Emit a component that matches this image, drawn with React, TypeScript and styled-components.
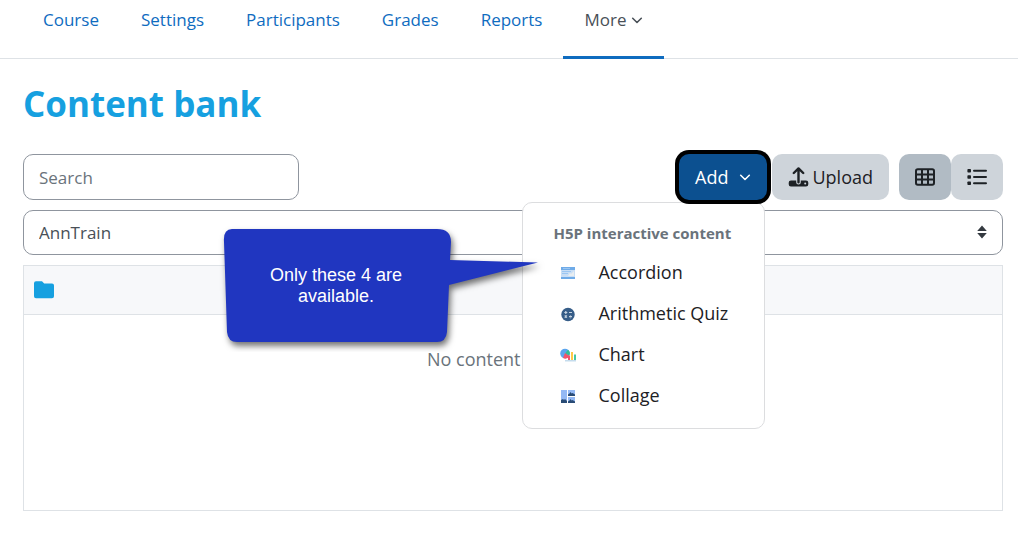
import React from "react";
import styled, { createGlobalStyle } from "styled-components";

const Global = createGlobalStyle`
  *, *::before, *::after { box-sizing: border-box; }
  body {
    margin: 0;
    background: #fff;
    color: #1d2125;
    font-family: "Open Sans", "Noto Sans", sans-serif;
    font-size: 18px;
    line-height: 28px;
  }
  button, input, select { font: inherit; color: inherit; margin: 0; }
`;

const Nav = styled.nav`
  display: flex;
  height: 59px;
  padding: 0 22px;
  border-bottom: 1px solid #dee2e6;
  font-size: 17px;
`;

const NavLink = styled.a<{ $active?: boolean }>`
  display: flex;
  align-items: center;
  gap: 5px;
  height: 59px;
  padding: 0 21px 16px;
  border-bottom: 3px solid ${(p) => (p.$active ? "#0f6cbf" : "transparent")};
  color: ${(p) => (p.$active ? "#495057" : "#0f6cbf")};
  text-decoration: none;
  white-space: nowrap;
`;

const Main = styled.main`
  padding: 21px 15px 36px 23px;
`;

const Title = styled.h1`
  margin: 0 0 26px;
  color: #16a0e0;
  font-size: 35px;
  font-weight: 700;
  line-height: 48px;
`;

const Toolbar = styled.div`
  display: flex;
  align-items: center;
  margin-bottom: 10px;
`;

const SearchBox = styled.input`
  width: 276px;
  height: 46px;
  margin-right: auto;
  padding: 0 15px;
  border: 1px solid #8f959e;
  border-radius: 10px;
  background: #fff;
  font-size: 17px;
  &::placeholder { color: #6a737b; opacity: 1; }
`;

const AddWrap = styled.div`
  position: relative;
  z-index: 2;
  margin-right: 5px;
`;

const Button = styled.button<{ $tone?: "primary" | "active" }>`
  display: flex;
  align-items: center;
  justify-content: center;
  gap: 3px;
  height: 46px;
  padding: 0 16px;
  border: 0;
  border-radius: 10px;
  background: ${(p) =>
    p.$tone === "primary" ? "#0c5090" : p.$tone === "active" ? "#b1bbc4" : "#ced4da"};
  color: ${(p) => (p.$tone === "primary" ? "#fff" : "#1d2125")};
`;

const AddButton = styled(Button)`
  position: relative;
  z-index: 1;
  gap: 11px;
  box-shadow: 0 0 0 4px #000;
`;

const ViewToggle = styled.div`
  display: flex;
  margin-left: 10px;
  ${Button} { width: 52px; padding: 0; }
`;

const Menu = styled.div`
  position: absolute;
  top: calc(100% + 2px);
  right: 2px;
  width: 243px;
  padding: 16px 0 13px;
  border: 1px solid #dcdddf;
  border-radius: 10px;
  background: #fff;
`;

const MenuHeading = styled.h2`
  margin: 0 0 4px;
  padding: 0 30px;
  color: #6a737b;
  font-size: 15px;
  font-weight: 700;
  line-height: 28px;
  white-space: nowrap;
`;

const MenuItem = styled.a`
  display: flex;
  align-items: center;
  gap: 22px;
  height: 41px;
  padding: 0 30px;
  color: #1d2125;
  text-decoration: none;
  white-space: nowrap;
  svg { flex: none; margin: 3px 0 0 7px; }
`;

const ContextPicker = styled.div`
  position: relative;
  margin-bottom: 10px;
  svg { position: absolute; right: 15px; top: 15px; pointer-events: none; }
`;

const Select = styled.select`
  display: block;
  width: 100%;
  height: 45px;
  padding: 0 15px;
  border: 1px solid #8f959e;
  border-radius: 10px;
  background: #fff;
  color: #495057;
  font-size: 17px;
  appearance: none;
`;

const Bank = styled.section`
  position: relative;
  min-height: 246px;
  border: 1px solid #dee2e6;
`;

const BankHeader = styled.header`
  display: flex;
  align-items: center;
  height: 49px;
  padding: 0 10px;
  border-bottom: 1px solid #dee2e6;
  background: #f7f8fa;
`;

const Empty = styled.p`
  margin: 30px 0 0;
  color: #6a737b;
  text-align: center;
`;

const Callout = styled.aside`
  position: absolute;
  z-index: 3;
  left: 193px;
  top: -44px;
  width: 330px;
  height: 130px;
  pointer-events: none;
  svg { position: absolute; inset: 0; }
`;

const CalloutText = styled.p`
  position: relative;
  width: 238px;
  margin: 0;
  padding: 43px 46px 0;
  color: #fff;
  font-family: "Liberation Sans", Arial, sans-serif;
  font-size: 18px;
  line-height: 21px;
  text-align: center;
`;

const Chevron = () => (
  <svg width="12" height="12" viewBox="0 0 12 12" fill="none" stroke="currentColor" strokeWidth="1.6" strokeLinecap="round" strokeLinejoin="round" aria-hidden="true">
    <path d="M1.700 4.300 6 8.500l4.300-4.200" />
  </svg>
);

const UploadIcon = () => (
  <svg width="21" height="20" viewBox="0 0 21 20" aria-hidden="true">
    <path d="M10.5 15.2V2M5.8 6 10.5 1.4 15.2 6" fill="none" stroke="#1d2125" strokeWidth="2.4" strokeLinecap="round" strokeLinejoin="round" />
    <path d="M3 13.5h5.2v1.700a2.3 2.3 0 0 0 4.600 0v-1.700H18a2.300 2.300 0 0 1 2.300 2.300v1.400a2.300 2.300 0 0 1-2.300 2.300H3a2.300 2.300 0 0 1-2.300-2.300v-1.400A2.300 2.300 0 0 1 3 13.500Z" fill="#1d2125" />
    <circle cx="17.2" cy="16.5" r="1" fill="#ced4da" />
  </svg>
);

const GridIcon = () => (
  <svg width="20" height="18" viewBox="0 0 20 18" fill="none" stroke="#1d2125" strokeWidth="2" aria-hidden="true">
    <rect x="1" y="1.2" width="18" height="15.6" rx="1.8" />
    <path d="M7 1.2v15.6M13 1.2v15.6M1 6.4h18M1 11.6h18" />
  </svg>
);

const ListIcon = () => (
  <svg width="20" height="18" viewBox="0 0 20 18" fill="#1d2125" aria-hidden="true">
    <rect x="0.4" y="1" width="3.6" height="3.6" rx="0.8" />
    <rect x="0.4" y="7.2" width="3.6" height="3.6" rx="0.8" />
    <rect x="0.4" y="13.4" width="3.6" height="3.6" rx="0.8" />
    <path d="M7 2.8h12M7 9h12M7 15.2h12" stroke="#1d2125" strokeWidth="2" strokeLinecap="round" />
  </svg>
);

const SortIcon = () => (
  <svg width="12" height="14" viewBox="0 0 12 14" fill="#343a40" aria-hidden="true">
    <path d="M6 .5 10.8 6H1.200zM6 13.500 1.200 8h9.600z" />
  </svg>
);

const FolderIcon = () => (
  <svg width="20" height="18" viewBox="0 0 20 18" fill="#16a0e0" aria-hidden="true">
    <path d="M2 .3h6l2.200 2.300H18a2 2 0 0 1 2 2v10.700a2 2 0 0 1-2 2H2a2 2 0 0 1-2-2v-13a2 2 0 0 1 2-2Z" />
  </svg>
);

const AccordionIcon = () => (
  <svg width="16" height="16" viewBox="0 0 16 16" aria-hidden="true">
    <path fill="#6fabe8" d="M1 2h14v3H1zM1 12h14v2H1z" />
    <path fill="#c9def5" d="M1 5h14v7H1z" />
    <path fill="#9bc6f2" d="M3 3h7v1H3zM2 6h9v1H2zM2 8h6v1H2z" />
    <path fill="#e8edf0" d="m8 11 2-3 1 1 3-3v5z" />
  </svg>
);

const QuizIcon = () => (
  <svg width="16" height="16" viewBox="0 0 16 16" aria-hidden="true">
    <circle cx="8" cy="8.500" r="6.700" fill="#365d88" />
    <path d="M4.300 6.500h3M5.800 5v3M9 6.500h3M4.700 9.500l2.200 2.200M6.900 9.500l-2.200 2.200M9 10.600h3M10.500 9v.6M10.500 11.700v.6" stroke="#c6d3e1" strokeWidth="1.200" />
  </svg>
);

const ChartIcon = () => (
  <svg width="16" height="16" viewBox="0 0 16 16" aria-hidden="true">
    <circle cx="5" cy="6.500" r="4.800" fill="#5aa5ee" />
    <path fill="#31bf94" d="M5 6.500 8 2.700A4.800 4.800 0 0 1 9.300 8.500z" />
    <path fill="#f1546b" d="m5 6 4.300 3A4.800 4.800 0 0 1 3 11z" />
    <path fill="#c5dced" d="M5 13h11v1.500H5z" />
    <path fill="#f1546b" d="M8 8.500h2V13H8z" />
    <path fill="#ffc947" d="M11 5h2v8h-2z" />
    <path fill="#45c7a3" d="M14 7.500h2V13h-2z" />
  </svg>
);

const CollageIcon = () => (
  <svg width="16" height="16" viewBox="0 0 16 16" aria-hidden="true">
    <path fill="#94b9f5" d="M1 2h6v13H1zM8 2h7v6H8zM8 9h7v6H8z" />
    <path fill="#294b75" d="M1 15v-3l2-1 1 1 1-1 2 2v2zM8 8V6.500l1.500-1 1-1.500 1 1.500 1-.500L15 6.500V8zM8 15v-1.500l1.500-1 1-1.500 1 1.500 1-.500 2.500 1.500V15z" />
  </svg>
);

const tabs = ["Course", "Settings", "Participants", "Grades", "Reports"];

const contentTypes = [
  { name: "Accordion", Icon: AccordionIcon },
  { name: "Arithmetic Quiz", Icon: QuizIcon },
  { name: "Chart", Icon: ChartIcon },
  { name: "Collage", Icon: CollageIcon },
];

export default function App() {
  return (
    <>
      <Global />
      <Nav>
        {tabs.map((tab) => (
          <NavLink key={tab} href="#">{tab}</NavLink>
        ))}
        <NavLink href="#" $active>More <Chevron /></NavLink>
      </Nav>
      <Main>
        <Title>Content bank</Title>
        <Toolbar>
          <SearchBox type="text" placeholder="Search" aria-label="Search" />
          <AddWrap>
            <AddButton type="button" $tone="primary" aria-expanded="true">Add <Chevron /></AddButton>
            <Menu>
              <MenuHeading>H5P interactive content</MenuHeading>
              {contentTypes.map(({ name, Icon }) => (
                <MenuItem key={name} href="#"><Icon />{name}</MenuItem>
              ))}
            </Menu>
          </AddWrap>
          <Button type="button"><UploadIcon />Upload</Button>
          <ViewToggle>
            <Button type="button" $tone="active" aria-label="Grid view"><GridIcon /></Button>
            <Button type="button" aria-label="List view"><ListIcon /></Button>
          </ViewToggle>
        </Toolbar>
        <ContextPicker>
          <Select aria-label="Context" defaultValue="AnnTrain">
            <option>AnnTrain</option>
          </Select>
          <SortIcon />
        </ContextPicker>
        <Bank>
          <BankHeader><FolderIcon /></BankHeader>
          <Empty>No content available</Empty>
          <Callout>
            <svg width="330" height="130" viewBox="0 0 330 130" aria-hidden="true">
              <path
                d="M15 7H220Q234 7 234 20L233 38 321 40.500 232 63 230 110Q229 120 220 120H20Q11 120 10 110L7 20Q6 7 15 7Z"
                fill="#2036c0"
                style={{ filter: "drop-shadow(2px 4px 3px rgba(0,0,0,.55))" }}
              />
            </svg>
            <CalloutText>Only these 4 are available.</CalloutText>
          </Callout>
        </Bank>
      </Main>
    </>
  );
}
